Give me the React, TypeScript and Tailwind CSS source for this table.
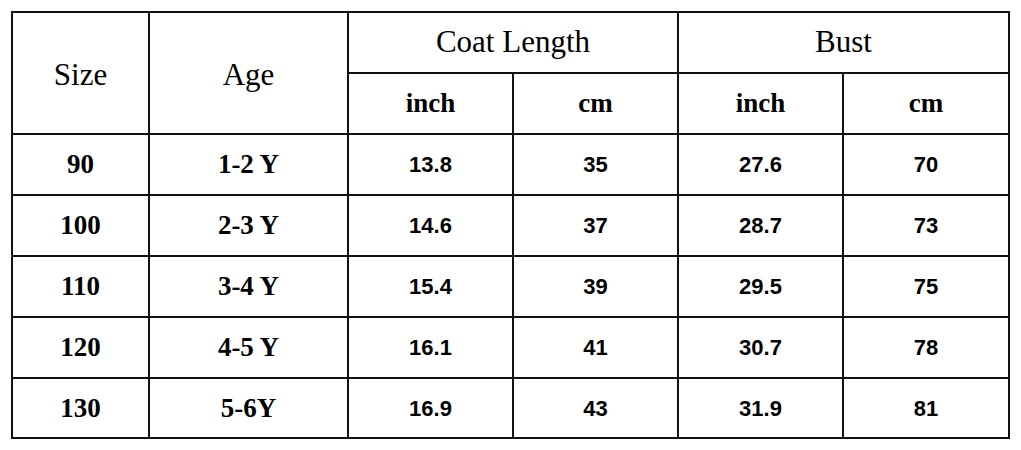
import React, { ReactElement } from "react";

const rows = [
  ["90", "1-2 Y", "13.8", "35", "27.6", "70"],
  ["100", "2-3 Y", "14.6", "37", "28.7", "73"],
  ["110", "3-4 Y", "15.4", "39", "29.5", "75"],
  ["120", "4-5 Y", "16.1", "41", "30.7", "78"],
  ["130", "5-6Y", "16.9", "43", "31.9", "81"],
];

const cell = "flex items-center justify-center border-r-2 border-b-2 border-[#111] text-black";
const serif = { fontFamily: '"Liberation Serif", "Times New Roman", serif' };
const sans = { fontFamily: '"Liberation Sans", Arial, sans-serif' };

export default function App(): ReactElement {
  return (
    <div className="w-[1021px] h-[450px] bg-white pl-[11px] pt-[11px]">
      <div
        className="grid grid-cols-[137px_199px_165px_165px_165px_166px] grid-rows-[61px_61px_61px_61px_61px_61px_60px] w-[999px] border-l-2 border-t-2 border-[#111]"
        style={serif}
      >
        <div className={`${cell} row-span-2 text-[31px] pt-1`}>Size</div>
        <div className={`${cell} row-span-2 text-[31px] pt-1`}>Age</div>
        <div className={`${cell} col-span-2 text-[31px]`}>Coat Length</div>
        <div className={`${cell} col-span-2 text-[31px]`}>Bust</div>
        <div className={`${cell} text-[27px] font-bold`}>inch</div>
        <div className={`${cell} text-[27px] font-bold`}>cm</div>
        <div className={`${cell} text-[27px] font-bold`}>inch</div>
        <div className={`${cell} text-[27px] font-bold`}>cm</div>
        {rows.map((r) => (
          <React.Fragment key={r[0]}>
            <div className={`${cell} text-[27px] font-bold`}>{r[0]}</div>
            <div className={`${cell} text-[27px] font-bold`}>{r[1]}</div>
            {r.slice(2).map((v, i) => (
              <div key={i} className={`${cell} text-[22px] font-bold`} style={sans}>
                {v}
              </div>
            ))}
          </React.Fragment>
        ))}
      </div>
    </div>
  );
}
